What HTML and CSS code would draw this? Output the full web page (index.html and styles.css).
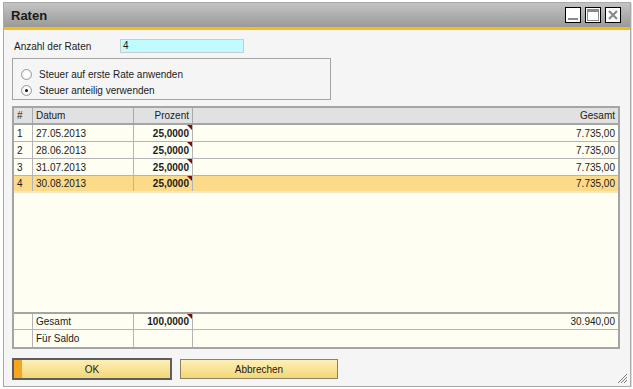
FILE: index.html
```html
<!DOCTYPE html>
<html lang="de">
<head>
    <meta charset="UTF-8">
    <title>Raten</title>
    <link rel="stylesheet" href="styles.css">
</head>
<body>
    <div class="window">
        <div class="titlebar">
            <span class="title">Raten</span>
            <div class="title-buttons">
                <div class="tbtn">
                    <svg width="14" height="14" viewBox="0 0 14 14"><rect x="2" y="10" width="10" height="2" fill="#8a8a8a"/></svg>
                </div>
                <div class="tbtn">
                    <svg width="14" height="14" viewBox="0 0 14 14"><rect x="1.5" y="1.5" width="11" height="11" fill="none" stroke="#8a8a8a"/><rect x="1" y="1" width="12" height="3" fill="#8a8a8a"/></svg>
                </div>
                <div class="tbtn">
                    <svg width="14" height="14" viewBox="0 0 14 14"><path d="M3 3 L11 11 M11 3 L3 11" stroke="#8a8a8a" stroke-width="2.2"/></svg>
                </div>
            </div>
        </div>
        <div class="content">
            <div class="field-row">
                <span class="field-label">Anzahl der Raten</span>
                <div class="field-input">4</div>
            </div>
            <div class="groupbox">
                <div class="radio-row"><span class="radio"></span>Steuer auf erste Rate anwenden</div>
                <div class="radio-row"><span class="radio checked"></span>Steuer anteilig verwenden</div>
            </div>
            <div class="grid">
                <div class="row head">
                    <div class="cell">#</div>
                    <div class="cell">Datum</div>
                    <div class="cell right">Prozent</div>
                    <div class="cell right">Gesamt</div>
                </div>
                <div class="row">
                    <div class="cell">1</div>
                    <div class="cell">27.05.2013</div>
                    <div class="cell right bold flag">25,0000</div>
                    <div class="cell right">7.735,00</div>
                </div>
                <div class="row">
                    <div class="cell">2</div>
                    <div class="cell">28.06.2013</div>
                    <div class="cell right bold flag">25,0000</div>
                    <div class="cell right">7.735,00</div>
                </div>
                <div class="row">
                    <div class="cell">3</div>
                    <div class="cell">31.07.2013</div>
                    <div class="cell right bold flag">25,0000</div>
                    <div class="cell right">7.735,00</div>
                </div>
                <div class="row selected">
                    <div class="cell">4</div>
                    <div class="cell">30.08.2013</div>
                    <div class="cell right bold flag">25,0000</div>
                    <div class="cell right">7.735,00</div>
                </div>
                <div class="filler"></div>
                <div class="row foot first">
                    <div class="cell"></div>
                    <div class="cell">Gesamt</div>
                    <div class="cell right bold flag">100,0000</div>
                    <div class="cell right">30.940,00</div>
                </div>
                <div class="row foot">
                    <div class="cell"></div>
                    <div class="cell">Für Saldo</div>
                    <div class="cell"></div>
                    <div class="cell"></div>
                </div>
            </div>
            <div class="buttons">
                <button class="btn btn-default">OK</button>
                <button class="btn">Abbrechen</button>
            </div>
        </div>
        <svg class="grip" width="12" height="12" viewBox="0 0 12 12">
            <path d="M11 2 L2 11 M11 5 L5 11 M11 8 L8 11" stroke="#7a7a7a" stroke-width="1"/>
        </svg>
    </div>
</body>
</html>
```

FILE: styles.css
```css
body {
    margin: 0;
    background-color: #fff;
    font-family: "Liberation Sans", Arial, sans-serif;
    font-size: 10px;
    color: #1b1b1b;
}

.window {
    position: relative;
    margin: 2px 0 0 3px;
    width: 626px;
    height: 383px;
    border: 1px solid #a9a9a9;
    box-shadow: 1px 1px 0 #dcdcdc;
    display: flex;
    flex-direction: column;
    background-color: #f5f5f5;
}

.titlebar {
    height: 24px;
    display: flex;
    align-items: center;
    justify-content: space-between;
    padding: 0 9px 0 7px;
    background: linear-gradient(#c3c3c3, #999b97);
    border-bottom: 3px solid #f9bb15;
}

.title {
    font-weight: bold;
    font-size: 13px;
    color: #1a1a1a;
}

.title-buttons {
    display: flex;
    gap: 4px;
}

.tbtn {
    width: 14px;
    height: 14px;
    border: 1px solid #000;
    background-color: #fff;
}

.tbtn svg {
    display: block;
}

.content {
    flex: 1;
    display: flex;
    flex-direction: column;
    padding: 9px 9px 0 8px;
}

.field-row {
    display: flex;
    align-items: center;
    height: 14px;
}

.field-label {
    width: 106px;
    padding-left: 2px;
}

.field-input {
    width: 120px;
    height: 12px;
    line-height: 12px;
    padding-left: 2px;
    border: 1px solid #c6cfd0;
    background-color: #c0fcff;
}

.groupbox {
    margin-top: 5px;
    width: 317px;
    height: 33px;
    border: 1px solid #a3a3a3;
    padding-top: 7px;
    box-sizing: content-box;
}

.radio-row {
    display: flex;
    align-items: center;
    height: 16px;
    padding-left: 8px;
}

.radio {
    width: 9px;
    height: 9px;
    margin-right: 7px;
    border-radius: 50%;
    border: 1px solid #9a9a9a;
    background: radial-gradient(#ffffff 40%, #e0e0e0);
    position: relative;
}

.radio.checked::after {
    content: "";
    position: absolute;
    left: 3px;
    top: 3px;
    width: 3px;
    height: 3px;
    border-radius: 50%;
    background-color: #111;
}

.grid {
    margin-top: 6px;
    width: 604px;
    height: 239px;
    border: 2px solid #a5a5a5;
    background-color: #fefef3;
    display: flex;
    flex-direction: column;
}

.row {
    display: grid;
    grid-template-columns: 19px 101px 59px 1fr;
    height: 17px;
    border-bottom: 1px solid #b4b4b4;
    box-sizing: border-box;
}

.row.head {
    height: 17px;
    background-color: #e1e1e1;
    border-bottom: 2px solid #a5a5a5;
}

.row.selected {
    background-color: #fbda8a;
    border-bottom: 2px solid #f1e9c8;
}

.row.foot.first {
    border-top: 2px solid #a5a5a5;
    height: 18px;
}

.row.foot:last-child {
    border-bottom: none;
}

.cell {
    position: relative;
    display: flex;
    align-items: center;
    padding: 0 3px 0 3px;
    border-right: 1px solid #b4b4b4;
    white-space: nowrap;
    overflow: hidden;
}

.row .cell:last-child {
    border-right: none;
}

.row.head .cell {
    border-right-color: #a9a9a9;
}

.cell.right {
    justify-content: flex-end;
}

.cell.bold {
    font-weight: bold;
}

.flag::after {
    content: "";
    position: absolute;
    top: 0;
    right: 0;
    border-top: 5px solid #7d0d0d;
    border-left: 5px solid transparent;
}

.filler {
    flex: 1;
}

.buttons {
    display: flex;
    align-items: center;
    gap: 8px;
    margin-top: 9px;
}

.btn {
    font-family: "Liberation Sans", Arial, sans-serif;
    font-size: 10px;
    color: #1b1b1b;
    width: 158px;
    height: 20px;
    padding: 0;
    border: 1px solid #8c8263;
    background: linear-gradient(#fdf0b8, #f3d777);
}

.btn-default {
    width: 160px;
    height: 22px;
    border: 2px solid #5e5e5e;
    background: linear-gradient(to right, #f6a51e 0, #f6a51e 8px, transparent 8px), linear-gradient(#fdf0b8, #f3d777);
}

.grip {
    position: absolute;
    right: 2px;
    bottom: 2px;
}
```
